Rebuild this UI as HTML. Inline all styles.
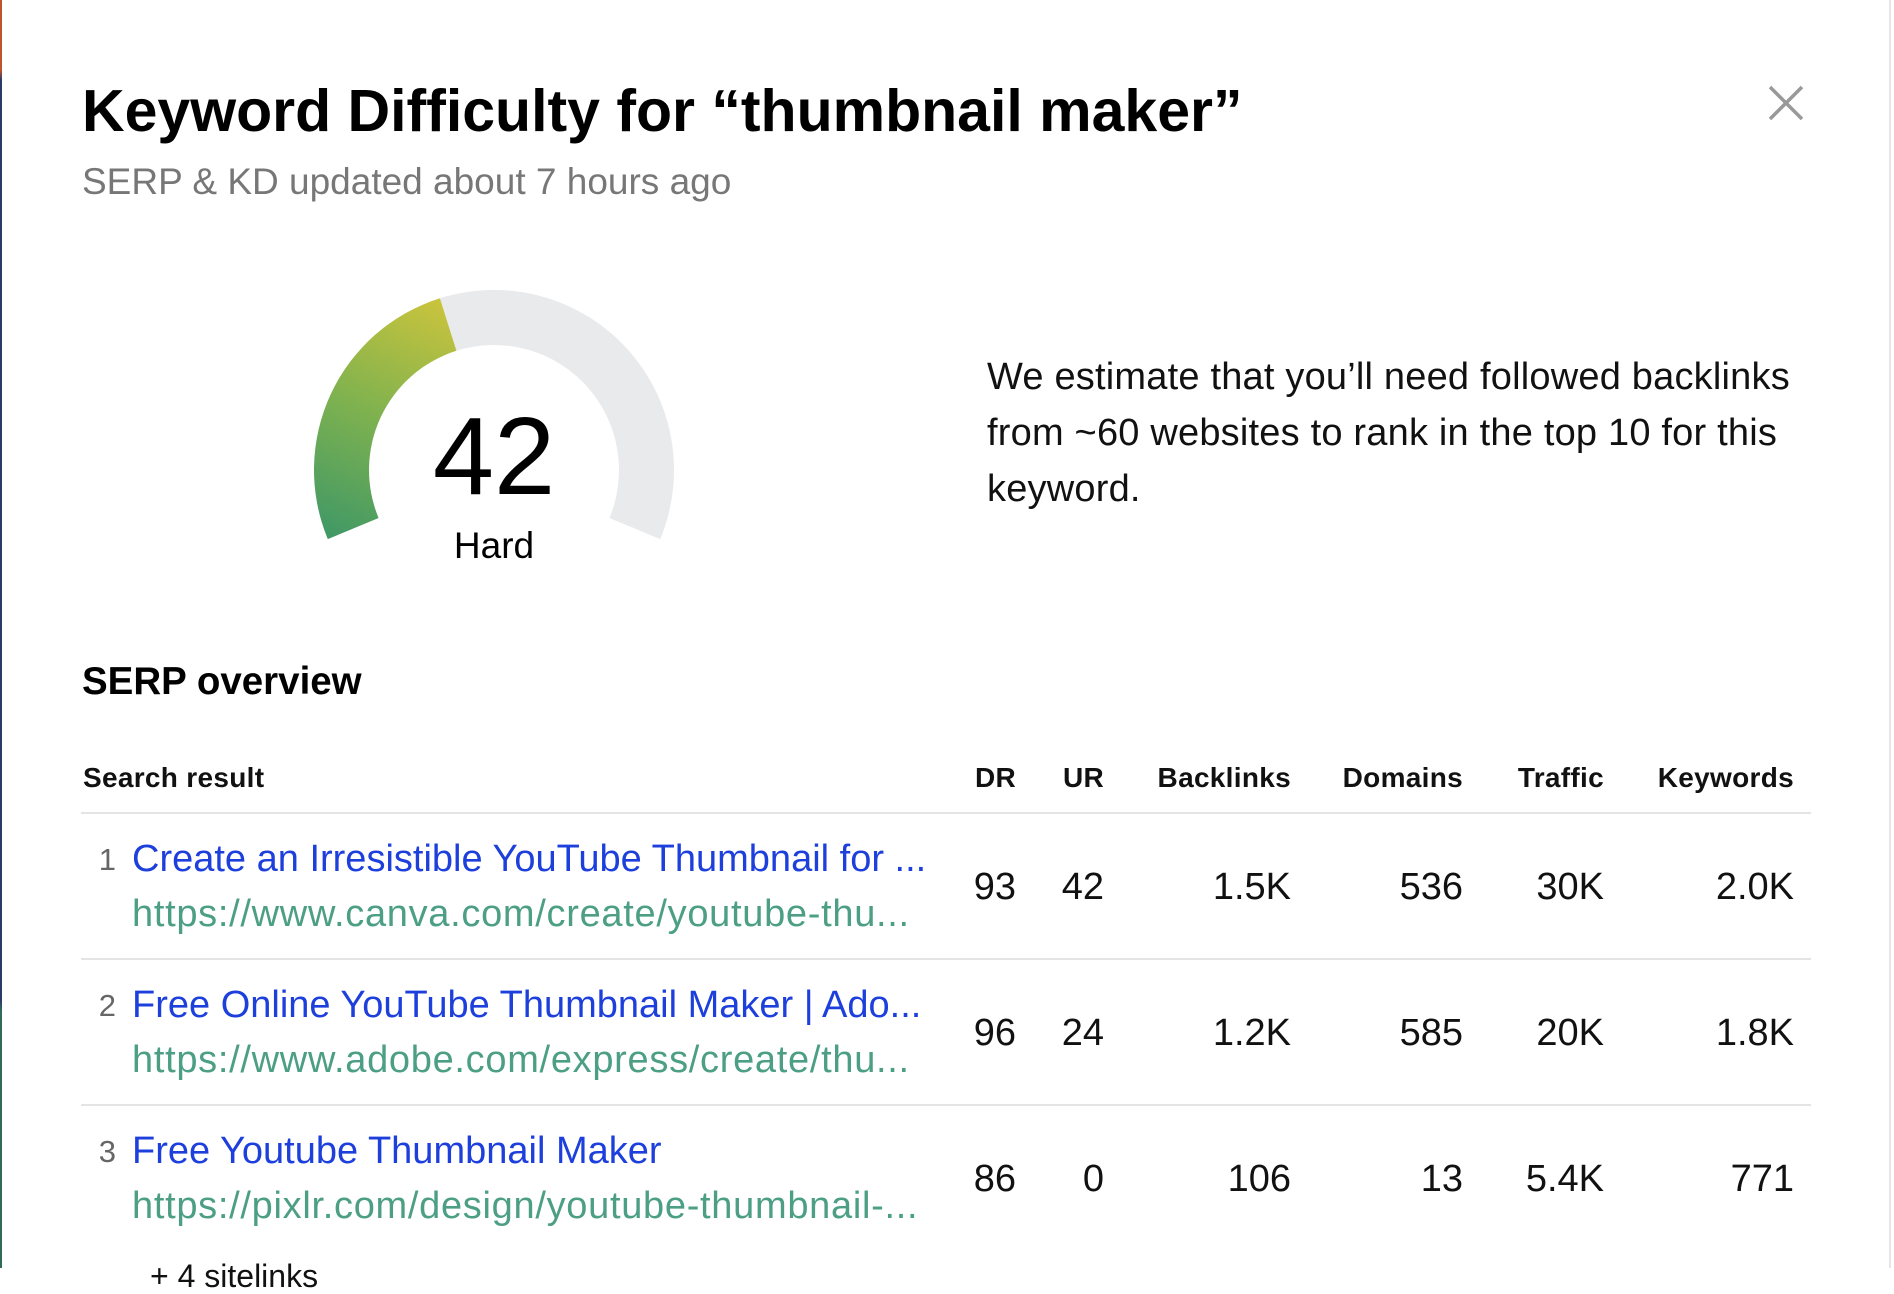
<!DOCTYPE html>
<html><head><meta charset="utf-8"><style>
html,body{margin:0;padding:0;background:#fff;}
body{width:1894px;height:1268px;position:relative;overflow:hidden;font-family:"Liberation Sans",sans-serif;color:#111;}
.a{position:absolute;white-space:nowrap;}
.strip{position:absolute;left:0;top:0;width:2px;height:1268px;background:linear-gradient(#c0532a 0,#c0532a 70px,#2b3a6a 80px,#2b3a6a 1000px,#2f6a5a 1010px,#2f6a5a 100%);}
.rline{position:absolute;left:1889px;top:0;width:2px;height:1268px;background:#e6e6e6;}
.hr{position:absolute;left:81px;width:1730px;height:2px;background:#e4e4e4;}
.h{font-weight:bold;font-size:28px;line-height:28px;top:764px;letter-spacing:0.3px;}
.t{font-size:38px;line-height:38px;color:#1d3fdc;left:132px;}
.u{font-size:38px;line-height:38px;color:#4c9f84;left:132px;letter-spacing:0.7px;}
.n{font-size:31px;line-height:31px;color:#666;text-align:right;width:40px;left:76px;}
.v{font-size:38px;line-height:38px;text-align:right;width:200px;}
</style></head><body>
<div class="strip"></div><div class="rline"></div>
<div class="a" style="left:82px;top:82px;font-size:59px;line-height:59px;font-weight:bold;color:#000;">Keyword Difficulty for “thumbnail maker”</div>
<div class="a" style="left:82px;top:163px;font-size:37px;line-height:37px;color:#777;">SERP &amp; KD updated about 7 hours ago</div>
<svg class="a" style="left:1766px;top:83px" width="40" height="40" viewBox="0 0 40 40"><path d="M4 4L36 36M36 4L4 36" stroke="#999" stroke-width="3.5" fill="none"/></svg>
<svg class="a" style="left:0;top:0" width="800" height="600">
<defs><linearGradient id="g" gradientUnits="userSpaceOnUse" x1="330" y1="540" x2="445" y2="300"><stop offset="0" stop-color="#3f9866"/><stop offset="0.5" stop-color="#7fb24f"/><stop offset="1" stop-color="#cbc43c"/></linearGradient></defs>
<path d="M439.9 298.3A180 180 0 0 1 660.2 539.1L609.4 518A125 125 0 0 0 456.4 350.8Z" fill="#e9eaec"/>
<path d="M327.8 539.1A180 180 0 0 1 439.9 298.3L456.4 350.8A125 125 0 0 0 378.6 518Z" fill="url(#g)"/>
</svg>
<div class="a" style="left:394px;width:200px;text-align:center;top:402px;font-size:110px;line-height:110px;color:#000;">42</div>
<div class="a" style="left:394px;width:200px;text-align:center;top:527px;font-size:37px;line-height:37px;color:#000;">Hard</div>
<div class="a" style="left:987px;top:349px;font-size:38px;line-height:56px;color:#111;letter-spacing:0.2px;">We estimate that you’ll need followed backlinks<br>from ~60 websites to rank in the top 10 for this<br>keyword.</div>
<div class="a" style="left:82px;top:663px;font-size:38.5px;line-height:38px;font-weight:bold;color:#000;">SERP overview</div>
<div class="a h" style="left:83px;">Search result</div>
<div class="a h" style="left:816px;width:200px;text-align:right;">DR</div>
<div class="a h" style="left:904px;width:200px;text-align:right;">UR</div>
<div class="a h" style="left:1091px;width:200px;text-align:right;">Backlinks</div>
<div class="a h" style="left:1263px;width:200px;text-align:right;">Domains</div>
<div class="a h" style="left:1404px;width:200px;text-align:right;">Traffic</div>
<div class="a h" style="left:1594px;width:200px;text-align:right;">Keywords</div>
<div class="hr" style="top:812px"></div>

<div class="a n" style="top:844px">1</div>
<div class="a t" style="top:840px">Create an Irresistible YouTube Thumbnail for ...</div>
<div class="a u" style="top:895px">https://www.canva.com/create/youtube-thu...</div>
<div class="a v" style="left:816px;top:868px">93</div><div class="a v" style="left:904px;top:868px">42</div><div class="a v" style="left:1091px;top:868px">1.5K</div><div class="a v" style="left:1263px;top:868px">536</div><div class="a v" style="left:1404px;top:868px">30K</div><div class="a v" style="left:1594px;top:868px">2.0K</div>
<div class="hr" style="top:958px"></div>

<div class="a n" style="top:990px">2</div>
<div class="a t" style="top:986px">Free Online YouTube Thumbnail Maker | Ado...</div>
<div class="a u" style="top:1041px">https://www.adobe.com/express/create/thu...</div>
<div class="a v" style="left:816px;top:1014px">96</div><div class="a v" style="left:904px;top:1014px">24</div><div class="a v" style="left:1091px;top:1014px">1.2K</div><div class="a v" style="left:1263px;top:1014px">585</div><div class="a v" style="left:1404px;top:1014px">20K</div><div class="a v" style="left:1594px;top:1014px">1.8K</div>
<div class="hr" style="top:1104px"></div>

<div class="a n" style="top:1136px">3</div>
<div class="a t" style="top:1132px">Free Youtube Thumbnail Maker</div>
<div class="a u" style="top:1187px">https://pixlr.com/design/youtube-thumbnail-...</div>
<div class="a v" style="left:816px;top:1160px">86</div><div class="a v" style="left:904px;top:1160px">0</div><div class="a v" style="left:1091px;top:1160px">106</div><div class="a v" style="left:1263px;top:1160px">13</div><div class="a v" style="left:1404px;top:1160px">5.4K</div><div class="a v" style="left:1594px;top:1160px">771</div>
<div class="a" style="left:150px;top:1260px;font-size:32px;line-height:32px;color:#111;">+ 4 sitelinks</div>
</body></html>
